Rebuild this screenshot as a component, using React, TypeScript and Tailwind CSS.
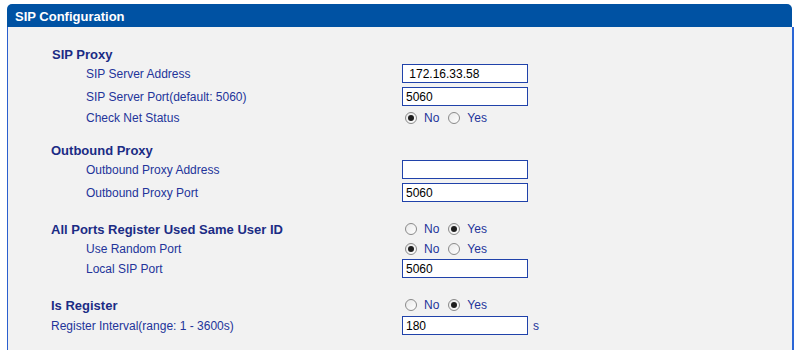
import React from "react";

function Radio({ checked }: { checked: boolean }) {
  return (
    <span className="relative inline-flex h-[12px] w-[12px] shrink-0 items-center justify-center rounded-full border border-[#8a8a8a] bg-gradient-to-br from-[#e8e8e8] to-white">
      {checked && <span className="h-[6px] w-[6px] rounded-full bg-[#1e1e1e]" />}
    </span>
  );
}

function RadioPair({ yes }: { yes: boolean }) {
  return (
    <div className="flex items-center pl-[3px] text-[12px] text-[#23349a]">
      <Radio checked={!yes} />
      <span className="pl-[7px] leading-none">No</span>
      <span className="ml-[9px] flex items-center">
        <Radio checked={yes} />
      </span>
      <span className="pl-[7px] leading-none">Yes</span>
    </div>
  );
}

function TextBox({ value }: { value: string }) {
  return (
    <div className="flex h-[19px] w-[126px] items-center whitespace-pre border border-[#2042aa] bg-white pl-[3px] text-[12px] leading-none text-black">
      {value}
    </div>
  );
}

function Row({
  label,
  bold,
  indent,
  h,
  mt,
  children,
}: {
  label: string;
  bold?: boolean;
  indent: number;
  h: number;
  mt?: number;
  children?: React.ReactNode;
}) {
  return (
    <div
      className="flex items-center"
      style={{ height: h, marginTop: mt ?? 0 }}
    >
      <div
        className={
          bold
            ? "w-[394px] shrink-0 text-[13px] font-bold leading-none text-[#1b2c85]"
            : "w-[394px] shrink-0 text-[12px] leading-none text-[#23349a]"
        }
        style={{ paddingLeft: indent }}
      >
        {label}
      </div>
      <div className="flex items-center">{children}</div>
    </div>
  );
}

export default function App() {
  return (
    <div
      className="h-[350px] w-[795px] overflow-hidden bg-white pl-[7px] pt-[4px]"
      style={{ fontFamily: '"Liberation Sans", Arial, sans-serif' }}
    >
      <div className="w-[787px]">
        <div className="flex h-[23px] w-[785px] items-center rounded-t-[5px] bg-[#0052a3] pl-[8px] pt-[2px] text-[13px] font-bold text-white">
          SIP Configuration
        </div>
        <div className="h-[330px] border-l border-r-2 border-l-[#2b5fcf] border-r-[#2b66d6] bg-[#f2f2f2] pt-[17px]">
          <Row label="SIP Proxy" bold indent={44} h={20} />
          <Row label="SIP Server Address" indent={78} h={19}>
            <TextBox value=" 172.16.33.58" />
          </Row>
          <Row label="SIP Server Port(default: 5060)" indent={78} h={19} mt={4}>
            <TextBox value="5060" />
          </Row>
          <Row label="Check Net Status" indent={78} h={24}>
            <RadioPair yes={false} />
          </Row>
          <Row label="Outbound Proxy" bold indent={43} h={20} mt={10} />
          <Row label="Outbound Proxy Address" indent={78} h={19}>
            <TextBox value="" />
          </Row>
          <Row label="Outbound Proxy Port" indent={78} h={19} mt={4}>
            <TextBox value="5060" />
          </Row>
          <Row label="All Ports Register Used Same User ID" bold indent={43} h={20} mt={17}>
            <RadioPair yes={true} />
          </Row>
          <Row label="Use Random Port" indent={78} h={20}>
            <RadioPair yes={false} />
          </Row>
          <Row label="Local SIP Port" indent={78} h={19}>
            <TextBox value="5060" />
          </Row>
          <Row label="Is Register" bold indent={43} h={20} mt={17}>
            <RadioPair yes={true} />
          </Row>
          <Row label="Register Interval(range: 1 - 3600s)" indent={43} h={19} mt={1}>
            <TextBox value="180" />
            <span className="pl-[5px] text-[12px] leading-none text-[#23349a]">s</span>
          </Row>
        </div>
      </div>
    </div>
  );
}
